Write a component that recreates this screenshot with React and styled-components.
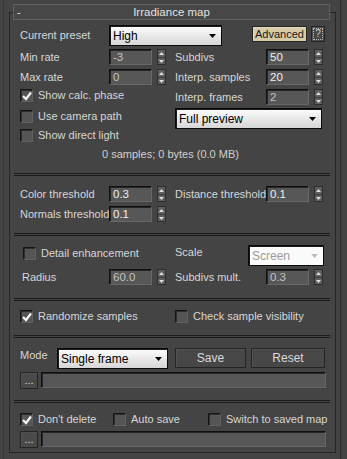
import React from 'react';
import styled, { createGlobalStyle } from 'styled-components';

const Global = createGlobalStyle`
  html, body { margin: 0; padding: 0; background: #444444; }
  body {
    font-family: "Liberation Sans", Arial, sans-serif;
    font-size: 11px;
    color: #d6d6d6;
  }
  * { box-sizing: border-box; }
`;

const Outer = styled.div`
  margin-left: 3px;
  width: 338px;
  min-height: 459px;
  border-left: 1px solid #383838;
  border-right: 1px solid #2e2e2e;
  padding: 12px 0 0 5px;
`;

const Rollout = styled.div`
  width: 327px;
  border: 1px solid #262626;
`;

const Header = styled.div`
  margin: -9px 5px 0 3px;
  height: 16px;
  border: 1px solid #606060;
  background: #474747;
  display: grid;
  grid-template-columns: 1fr auto 1fr;
  align-items: center;
  padding: 0 3px;
  line-height: 14px;
  color: #e2e2e2;
  font-size: 11.5px;
`;

const Minus = styled.span`
  font-size: 11px;
`;

const Section = styled.div`
  padding: ${(p) => p.$pt}px 0 ${(p) => p.$pb}px 10px;
`;

const Rule = styled.div`
  height: 3px;
  margin: 0 5px 0 4px;
  border-top: 1px solid #1a1a1a;
  border-bottom: 1px solid #1a1a1a;
`;

const Row = styled.div`
  display: flex;
  align-items: ${(p) => p.$align || 'center'};
  height: ${(p) => p.$h}px;
  margin-top: ${(p) => p.$mt || 0}px;
`;

const Label = styled.div`
  width: ${(p) => (p.$w ? `${p.$w}px` : 'auto')};
  padding-left: ${(p) => p.$pl || 0}px;
  margin-top: ${(p) => p.$mt || 0}px;
  line-height: 14px;
  white-space: nowrap;
  flex-shrink: 0;
`;

const Grid = styled.div`
  display: grid;
  grid-template-columns: 89px 57px 9px 91px 57px;
  grid-auto-rows: 16px;
  row-gap: 4px;
  align-items: center;
  margin-top: ${(p) => p.$mt || 0}px;
`;

const SpanCell = styled.div`
  grid-column: ${(p) => p.$col};
  align-self: start;
`;

const SpinWrap = styled.div`
  display: flex;
  gap: 5px;
  width: 57px;
`;

const NumBox = styled.div`
  width: 43px;
  height: 16px;
  background: #575757;
  border-style: solid;
  border-width: 1px;
  border-color: #0f0f0f #686868 #686868 #0f0f0f;
  box-shadow: inset 1px 1px 0 #262626;
  padding-left: 3px;
  line-height: 14px;
  font-size: 11.5px;
  color: ${(p) => (p.$dim ? '#c2c2c2' : '#f0f0f0')};
`;

const SpinBox = styled.div`
  width: 9px;
  height: 16px;
  background: #5d5d5d;
  border: 1px solid #2e2e2e;
  display: grid;
  grid-template-rows: 1fr 1fr;
`;

const SpinHalf = styled.div`
  display: flex;
  align-items: center;
  justify-content: center;
  border-top: ${(p) => (p.$bottom ? '1px solid #3a3a3a' : 'none')};
`;

const Spinner = () => (
  <SpinBox>
    <SpinHalf>
      <svg width="5" height="3" viewBox="0 0 5 3">
        <polygon points="2.5,0 5,3 0,3" fill="#e0e0e0" />
      </svg>
    </SpinHalf>
    <SpinHalf $bottom>
      <svg width="5" height="3" viewBox="0 0 5 3">
        <polygon points="0,0 5,0 2.5,3" fill="#e0e0e0" />
      </svg>
    </SpinHalf>
  </SpinBox>
);

const Spin = ({ value, dim }) => (
  <SpinWrap>
    <NumBox $dim={dim}>{value}</NumBox>
    <Spinner />
  </SpinWrap>
);

const CheckWrap = styled.div`
  display: flex;
  align-items: center;
  gap: 5px;
  width: ${(p) => (p.$w ? `${p.$w}px` : 'auto')};
  margin-left: ${(p) => p.$ml || 0}px;
  height: 13px;
  flex-shrink: 0;
  white-space: nowrap;
  line-height: 13px;
`;

const Box = styled.div`
  width: 13px;
  height: 13px;
  flex-shrink: 0;
  background: #555555;
  border-style: solid;
  border-width: 1px;
  border-color: #161616 #606060 #606060 #161616;
  box-shadow: inset 1px 1px 0 #2e2e2e;
  display: flex;
  align-items: center;
  justify-content: center;
`;

const Check = ({ checked, label, w, ml }) => (
  <CheckWrap $w={w} $ml={ml}>
    <Box>
      {checked && (
        <svg width="10" height="10" viewBox="0 0 10 10">
          <polyline points="1,5 4,8 9,1.5" fill="none" stroke="#f4f4f4" strokeWidth="2.2" />
        </svg>
      )}
    </Box>
    <span>{label}</span>
  </CheckWrap>
);

const Drop = styled.div`
  width: ${(p) => p.$w}px;
  height: 21px;
  flex-shrink: 0;
  background: ${(p) => (p.$disabled ? '#fbfbfb' : 'linear-gradient(#fdfdfd, #d6d6d6)')};
  border: 1px solid #0a0a0a;
  box-shadow: inset 1px 1px 0 #1a1a1a;
  display: flex;
  align-items: center;
  justify-content: space-between;
  padding: 1px 5px 0 3px;
  color: ${(p) => (p.$disabled ? '#9c9c9c' : '#000')};
  font-size: 12px;
`;

const Dropdown = ({ w, value, disabled }) => (
  <Drop $w={w} $disabled={disabled}>
    <span>{value}</span>
    <svg width="7" height="4" viewBox="0 0 7 4">
      <polygon points="0,0 7,0 3.5,4" fill={disabled ? '#bdbdbd' : '#000'} />
    </svg>
  </Drop>
);

const Button = styled.div`
  width: ${(p) => p.$w}px;
  height: ${(p) => p.$h || 20}px;
  flex-shrink: 0;
  margin-left: ${(p) => p.$ml || 0}px;
  margin-top: ${(p) => p.$mt || 0}px;
  background: ${(p) => p.$bg || '#474747'};
  border: 1px solid #242424;
  box-shadow: inset 1px 1px 0 ${(p) => p.$hi || '#525252'};
  color: ${(p) => p.$fg || '#dadada'};
  display: flex;
  align-items: center;
  justify-content: center;
  font-size: ${(p) => p.$fs || 12}px;
  line-height: 1;
  white-space: nowrap;
`;

const HelpInner = styled.div`
  width: 10px;
  height: 12px;
  border: 1px dotted #b8b8b8;
  display: flex;
  align-items: center;
  justify-content: center;
  font-size: 10px;
  color: #d0d0d0;
`;

const PathField = styled.div`
  width: 285px;
  height: 16px;
  margin-left: 3px;
  background: #575757;
  border-style: solid;
  border-width: 1px;
  border-color: #0f0f0f #666666 #666666 #0f0f0f;
  box-shadow: inset 1px 1px 0 #262626;
`;

const Info = styled.div`
  margin-top: 5px;
  text-align: center;
  line-height: 14px;
  padding-right: 14px;
  color: #d0d0d0;
`;

const Column = styled.div`
  display: flex;
  flex-direction: column;
  gap: 6px;
  width: 155px;
  padding-top: 2px;
  flex-shrink: 0;
`;

const Block = styled.div`
  display: flex;
  align-items: flex-start;
  margin-top: 3px;
`;

const PathRow = ({ mt }) => (
  <Row $h={17} $align="flex-start" $mt={mt}>
    <Button $w={18} $h={17} $fs={11} $bg="#4a4a4a">...</Button>
    <PathField />
  </Row>
);

export default function App() {
  return (
    <>
      <Global />
      <Outer>
        <Rollout>
          <Header>
            <Minus>-</Minus>
            <span>Irradiance map</span>
            <span />
          </Header>

          <Section $pt={5} $pb={12}>
            <Row $h={21} $align="flex-start">
              <Label $w={89} $mt={3}>Current preset</Label>
              <Dropdown w={113} value="High" />
              <Button $w={55} $h={16} $ml={30} $mt={1} $fs={11} $bg="#d6caa7" $fg="#1a1a1a" $hi="#e6dcc0">
                Advanced
              </Button>
              <Button $w={14} $h={16} $ml={4} $mt={1}>
                <HelpInner>?</HelpInner>
              </Button>
            </Row>

            <Grid $mt={3}>
              <Label>Min rate</Label>
              <Spin value="-3" dim />
              <span />
              <Label>Subdivs</Label>
              <Spin value="50" />

              <Label>Max rate</Label>
              <Spin value="0" dim />
              <span />
              <Label>Interp. samples</Label>
              <Spin value="20" />

              <SpanCell $col="1 / 4">
                <Check checked label="Show calc. phase" />
              </SpanCell>
              <Label>Interp. frames</Label>
              <Spin value="2" dim />
            </Grid>

            <Block>
              <Column>
                <Check label="Use camera path" />
                <Check label="Show direct light" />
              </Column>
              <Dropdown w={147} value="Full preview" />
            </Block>

            <Info>0 samples; 0 bytes (0.0 MB)</Info>
          </Section>
          <Rule />

          <Section $pt={10} $pb={11}>
            <Grid>
              <Label>Color threshold</Label>
              <Spin value="0.3" />
              <span />
              <Label>Distance threshold</Label>
              <Spin value="0.1" />

              <Label>Normals threshold</Label>
              <Spin value="0.1" />
            </Grid>
          </Section>
          <Rule />

          <Section $pt={9} $pb={13}>
            <Row $h={21} $align="flex-start">
              <Column>
                <Check label="Detail enhancement" ml={3} />
              </Column>
              <Label $w={73}>Scale</Label>
              <Dropdown w={76} value="Screen" disabled />
            </Row>
            <Grid $mt={3}>
              <Label $pl={2}>Radius</Label>
              <Spin value="60.0" dim />
              <span />
              <Label>Subdivs mult.</Label>
              <Spin value="0.3" dim />
            </Grid>
          </Section>
          <Rule />

          <Section $pt={9} $pb={12}>
            <Row $h={13}>
              <Check checked label="Randomize samples" w={155} />
              <Check label="Check sample visibility" />
            </Row>
          </Section>
          <Rule />

          <Section $pt={10} $pb={11}>
            <Row $h={21} $align="flex-start">
              <Label $w={37}>Mode</Label>
              <Dropdown w={111} value="Single frame" />
              <Button $w={71} $ml={7}>Save</Button>
              <Button $w={74} $ml={5}>Reset</Button>
            </Row>
            <PathRow mt={3} />
          </Section>
          <Rule />

          <Section $pt={10} $pb={4}>
            <Row $h={13}>
              <Check checked label="Don't delete" w={93} />
              <Check label="Auto save" w={95} />
              <Check label="Switch to saved map" />
            </Row>
            <PathRow mt={5} />
          </Section>
        </Rollout>
      </Outer>
    </>
  );
}
